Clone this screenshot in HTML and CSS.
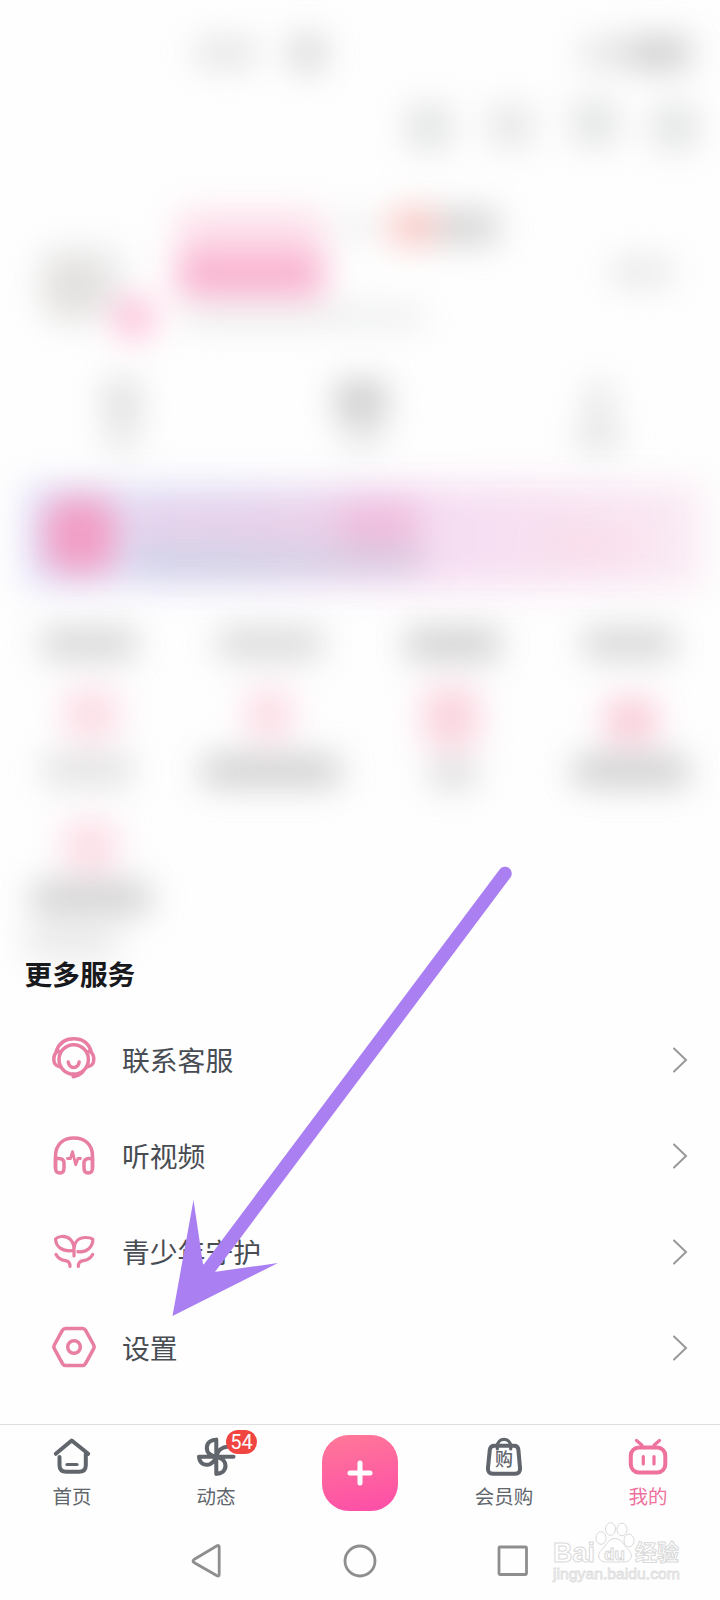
FILE: index.html
```html
<!DOCTYPE html>
<html lang="zh-CN">
<head>
<meta charset="utf-8">
<title>我的</title>
<link rel="stylesheet" href="styles.css">
</head>
<body>
<main class="screen">
  <section class="profile" aria-hidden="true">
    <svg class="haze" width="720" height="960" viewBox="0 0 720 960">
      <defs>
        <linearGradient id="vip" x1="0" x2="1" y1="0" y2="0">
          <stop offset="0" stop-color="#e2e4fb"/>
          <stop offset=".3" stop-color="#e4e0f5"/>
          <stop offset=".6" stop-color="#f5dcf2"/>
          <stop offset="1" stop-color="#faeaf3"/>
        </linearGradient>
        <filter id="soft" filterUnits="userSpaceOnUse" x="-60" y="-60" width="840" height="1080" color-interpolation-filters="sRGB"><feGaussianBlur stdDeviation="17"/></filter>
      </defs>
      <g filter="url(#soft)">
        <rect x="24" y="484" width="676" height="104" fill="url(#vip)"/>
      </g>
      <g class="haze-content" filter="url(#soft)">
        <g fill="#cfcfcf">
          <rect x="196" y="40" width="60" height="26"/>
          <rect x="292" y="36" width="32" height="34" fill="#b8b8b8"/>
          <rect x="582" y="40" width="50" height="26"/>
          <rect x="632" y="38" width="58" height="30" fill="#a8a8a8"/>
        </g>
        <g fill="#cdcfcf">
          <rect x="408" y="106" width="42" height="42"/>
          <rect x="490" y="106" width="42" height="40" fill="#d4d5d5"/>
          <rect x="574" y="102" width="42" height="42"/>
          <rect x="654" y="106" width="42" height="42"/>
        </g>
        <rect x="43" y="248" width="80" height="64" fill="#e2e2e2"/>
        <ellipse cx="73" cy="288" rx="33" ry="35" fill="#d2cfcc"/>
        <circle cx="134" cy="318" r="20" fill="#ff8cbc"/>
        <rect x="178" y="212" width="144" height="40" fill="#fcc8dc"/>
        <rect x="178" y="254" width="146" height="42" fill="#f67fb0"/>
        <rect x="184" y="310" width="240" height="14" fill="#d2d5d4"/>
        <rect x="338" y="218" width="34" height="18" fill="#dedede"/>
        <rect x="390" y="210" width="46" height="34" fill="#f5a09a"/>
        <rect x="438" y="211" width="60" height="32" fill="#b6b6b6"/>
        <rect x="612" y="260" width="60" height="24" fill="#d4d4d4"/>
        <rect x="105" y="382" width="34" height="34" fill="#c2c2c2"/>
        <rect x="105" y="424" width="34" height="24" fill="#d0d0d0"/>
        <rect x="336" y="382" width="50" height="36" fill="#a8a8a8"/>
        <rect x="343" y="424" width="38" height="22" fill="#cecece"/>
        <rect x="590" y="384" width="18" height="32" fill="#c0c0c0"/>
        <rect x="578" y="424" width="42" height="24" fill="#cacaca"/>
        <rect x="130" y="508" width="290" height="28" fill="#eac0de"/>
        <rect x="340" y="502" width="76" height="44" fill="#efa8d0"/>
        <rect x="132" y="550" width="290" height="18" fill="#b5b5c8"/>
        <rect x="44" y="497" width="72" height="76" rx="20" fill="#fb72a4"/>
        <rect x="545" y="528" width="92" height="30" fill="#fbd9e3"/>
        <g fill="#aeaeae">
          <rect x="42" y="631" width="94" height="25"/>
          <rect x="218" y="631" width="104" height="25" fill="#b6b6b8"/>
          <rect x="406" y="631" width="94" height="26" fill="#a4a4a4"/>
          <rect x="584" y="631" width="90" height="25"/>
          <rect x="44" y="758" width="88" height="24" fill="#c4c4c4"/>
          <rect x="202" y="757" width="138" height="28" fill="#aaaaaa"/>
          <rect x="432" y="762" width="42" height="24" fill="#b8b8b8"/>
          <rect x="574" y="757" width="114" height="28" fill="#a8a8a8"/>
          <rect x="32" y="884" width="118" height="28" fill="#aaaaaa"/>
          <rect x="26" y="932" width="92" height="22" fill="#cecece"/>
        </g>
        <g fill="#fac6d5">
          <rect x="64" y="690" width="54" height="48"/>
          <rect x="246" y="690" width="46" height="48"/>
          <rect x="424" y="688" width="54" height="58" fill="#f8b6c9"/>
          <rect x="606" y="700" width="50" height="40" fill="#f6a4bc"/>
          <rect x="64" y="822" width="52" height="48"/>
        </g>
      </g>
    </svg>
  </section>

  <section class="services">
    <h2 class="services-title">更多服务</h2>
    <ul class="list">
      <li class="row">
        <svg class="row-icon" viewBox="0 0 48 48">
          <path d="M6.200 15.500C9 6.800 15.500 2.800 23.700 2.800S38.500 6.800 41.200 15.500"/>
          <circle cx="23.700" cy="23.500" r="14.700"/>
          <path d="M8.500 15.200C5 16.500 3.800 19.500 3.800 23.300s2 7 6 7.400M38.900 15.200C42.500 16.500 43.800 19.500 43.800 23.300s-2 7-6 7.400M18.200 26c1.300 7.200 9.700 7.200 11 0M23.200 38v2.700c3.500-.4 6.800-2 9.500-4.700"/>
        </svg>
        <span class="row-label">联系客服</span>
        <svg class="chevron" viewBox="0 0 16 26"><path d="M2 1.500 14 13 2 24.500"/></svg>
      </li>
      <li class="row">
        <svg class="row-icon" viewBox="0 0 48 48">
          <path d="M5.500 36V24C5.500 12.500 13 6 24 6S42.500 12.500 42.500 24v12"/>
          <path d="M5.500 26.500h3.500q5 0 5 5v4.500q0 5-4.200 5t-4.300-5zM42.500 26.500h-3.500q-5 0-5 5v4.500q0 5 4.200 5t4.300-5z"/>
          <path class="thin" d="M17.500 26.500h3L22.500 19.700l3.200 13L28 26.500h2.500"/>
        </svg>
        <span class="row-label">听视频</span>
        <svg class="chevron" viewBox="0 0 16 26"><path d="M2 1.500 14 13 2 24.500"/></svg>
      </li>
      <li class="row">
        <svg class="row-icon sprout" viewBox="0 0 48 48">
          <path d="M24 28v-6C24 13 19 8 11.500 8.500Q7.500 8.800 5.500 11C6 19 12 23.500 22 22.700M24 22C24 14 28.500 9.500 35.500 9.500q5 0 7.300 1.800C43 19.500 36 25 27.800 23.700"/>
          <path d="M6 26.500c2 3.800 5 5.500 9.500 6.200q4.500.8 4.500 5.800M42.700 26.500c-2 3.800-5 5.500-9.500 6.200q-4.900.8-4.900 5.800"/>
        </svg>
        <span class="row-label">青少年守护</span>
        <svg class="chevron" viewBox="0 0 16 26"><path d="M2 1.500 14 13 2 24.500"/></svg>
      </li>
      <li class="row">
        <svg class="row-icon" viewBox="0 0 48 48">
          <path d="M15.500 4.500h17q2 0 3 1.700l8.200 14.800q1 1.800 0 3.600l-8.200 15q-1 1.800-3 1.800h-17q-2 0-3-1.800l-8.200-15q-1-1.800 0-3.600L12.500 6.200q1-1.700 3-1.700z"/>
          <circle cx="24" cy="23" r="6.300"/>
        </svg>
        <span class="row-label">设置</span>
        <svg class="chevron" viewBox="0 0 16 26"><path d="M2 1.500 14 13 2 24.500"/></svg>
      </li>
    </ul>
  </section>

  <nav class="tabs">
    <a class="tab">
      <svg class="tab-icon" viewBox="0 0 48 48">
        <path d="M7.800 21.800 23.700 8.500 40.200 21.800M11.500 25v8.300q0 6.500 7 6.500h12.300q7 0 7-6.500V22"/>
        <path class="fine" d="M19 32.500h10"/>
      </svg>
      <span>首页</span>
    </a>
    <a class="tab">
      <span class="badge-wrap">
        <svg class="tab-icon" viewBox="0 0 48 48">
          <path d="M24.300 7.500v34.500M7 24.700H41.500M24.300 7.800C16.500 8 13.500 13 15.300 19q1.700 4.500 9 5.700M7 24.700C7.500 31.500 12 34 17.500 32.300q5-1.800 6.800-7.600M24.300 41.700C32 41.500 35 36 32.800 30.500q-2-4.500-8.500-5.800M24.300 24.700Q26 17.500 31 15.800q1.500-.7 3.500-.7"/>
        </svg>
        <b class="badge">54</b>
      </span>
      <span>动态</span>
    </a>
    <a class="tab tab-add">
      <span class="add"><svg width="26" height="26" viewBox="0 0 26 26"><path d="M13 3v20M3 13h20"/></svg></span>
    </a>
    <a class="tab">
      <svg class="tab-icon" viewBox="0 0 48 48">
        <path d="M14.500 13.700h19.500q4 0 4.400 4l1.600 18q.5 6-5 6H13q-5.500 0-5-6l1.800-18q.6-4 4.700-4z"/>
        <path class="fine" d="M17.300 17v-2.500C17.300 5 30.700 5 30.700 14.500V17"/>
        <text class="bag-mark" x="24" y="34">购</text>
      </svg>
      <span>会员购</span>
    </a>
    <a class="tab tab-active">
      <svg class="tab-icon" viewBox="0 0 48 48">
        <rect x="6.800" y="15.500" width="34.500" height="25" rx="8"/>
        <path class="fine" d="M19.300 24.500v7.500M30 24.500v7.500M12.500 8.500l5.500 4.700M35.500 8.500 30 13.200"/>
      </svg>
      <span>我的</span>
    </a>
  </nav>

  <div class="system">
    <svg class="sys-icon" viewBox="0 0 36 36"><path d="M5 16.500 28 2.800q2.200-1 2.200 1.500v27q0 2.500-2.200 1.500L5 19.500q-2-1.500 0-3z"/></svg>
    <svg class="sys-icon" viewBox="0 0 36 36"><circle cx="18" cy="18" r="15"/></svg>
    <svg class="sys-icon" viewBox="0 0 36 36"><rect x="4" y="4" width="27.500" height="27.500" rx="1"/></svg>
  </div>

  <svg class="watermark" width="140" height="70" viewBox="0 0 140 70">
    <g class="wm-shape">
      <ellipse cx="53" cy="18" rx="5" ry="6.300"/>
      <ellipse cx="62.500" cy="9" rx="5" ry="6.300"/>
      <ellipse cx="74" cy="9.500" rx="5" ry="6.300"/>
      <ellipse cx="81" cy="20.500" rx="5" ry="6.300"/>
      <path d="M67 18.500c-7 0-8.500 7-13 11-6 5-3.500 12.500 4 12.500h18c7.500 0 10-7.500 4-12.500-4.500-4-6-11-13-11z"/>
    </g>
    <text class="wm-brand" x="5" y="41.500" textLength="42" lengthAdjust="spacingAndGlyphs">Bai</text>
    <text class="wm-du" x="56" y="40" textLength="21">du</text>
    <text class="wm-cn" x="87" y="40" textLength="44">经验</text>
    <text class="wm-url" x="5" y="59" textLength="127" lengthAdjust="spacingAndGlyphs">jingyan.baidu.com</text>
  </svg>

  <svg class="pointer" width="720" height="1600" viewBox="0 0 720 1600">
    <path class="shaft" d="M505 873.500 206.500 1272"/>
    <path class="head" d="M172.500 1316 193.500 1200 203 1264 214 1272 278 1263z"/>
  </svg>
</main>
</body>
</html>
```
FILE: styles.css
```css
* { box-sizing: border-box; }

body {
  margin: 0;
  background: #fefefe;
  font-family: "Noto Sans CJK SC", sans-serif;
}

.screen {
  position: relative;
  display: flex;
  flex-direction: column;
  width: 720px;
  height: 1600px;
  overflow: hidden;
}

.profile { height: 940px; }

.haze {
  display: block;
  overflow: visible;
}

.haze-content { opacity: .62; }

.services {
  position: relative;
  height: 484px;
}

.services-title {
  margin: 0;
  padding: 13px 0 0 24.5px;
  height: 72px;
  font-size: 27.7px;
  line-height: 40px;
  font-weight: 700;
  color: #18191c;
}

.list {
  margin: 0;
  padding: 0;
  list-style: none;
}

.row {
  display: flex;
  align-items: center;
  height: 96px;
  padding: 0 32px 0 50px;
}

.row-icon {
  width: 48px;
  height: 48px;
  fill: none;
  stroke: #e87ea3;
  stroke-width: 3.5;
  stroke-linecap: round;
  stroke-linejoin: round;
}

.thin { stroke-width: 2.8; }
.sprout { stroke-width: 3.2; }

.row-label {
  flex: 1;
  margin-left: 24px;
  padding-bottom: 3px;
  font-size: 27.8px;
  line-height: 40px;
  color: #484c53;
}

.chevron {
  width: 16px;
  height: 26px;
  fill: none;
  stroke: #999;
  stroke-width: 2;
  stroke-linecap: round;
}

.tabs {
  display: grid;
  grid-template-columns: repeat(5, 1fr);
  height: 96px;
  border-top: 1px solid #dedede;
}

.tab {
  display: flex;
  flex-direction: column;
  align-items: center;
  padding-top: 7px;
  font-size: 19.5px;
  line-height: 32px;
  color: #61666d;
}

.tab-icon {
  display: block;
  width: 48px;
  height: 48px;
  fill: none;
  stroke: currentColor;
  stroke-width: 4;
  stroke-linecap: round;
  stroke-linejoin: round;
}

.fine { stroke-width: 3.2; }
.tab-active { color: #ee719e; }
.badge-wrap { position: relative; }

.badge {
  position: absolute;
  left: 34px;
  top: -2px;
  width: 31px;
  height: 24px;
  border-radius: 12px;
  background: #f04540;
  color: #fff;
  font: 400 20px/25px Roboto, sans-serif;
  text-align: center;
}

.bag-mark {
  font-size: 18px;
  font-weight: 500;
  text-anchor: middle;
  fill: currentColor;
  stroke: none;
}

.tab-add { padding-top: 10px; }

.add {
  display: flex;
  align-items: center;
  justify-content: center;
  width: 76px;
  height: 76px;
  border-radius: 27px;
  background: linear-gradient(170deg, #ff7898, #fd4da8);
}

.add svg {
  fill: none;
  stroke: #fff;
  stroke-width: 5;
  stroke-linecap: round;
}

.system {
  display: flex;
  justify-content: center;
  gap: 117px;
  height: 80px;
  padding-top: 22.5px;
}

.sys-icon {
  width: 36px;
  height: 36px;
  fill: none;
  stroke: #8e8e8e;
  stroke-width: 2.8;
}

.watermark {
  position: absolute;
  left: 548px;
  top: 1520px;
}

.watermark text,
.wm-shape {
  fill: #fff;
  stroke: #d9d9d9;
  stroke-width: 1;
}

.watermark .wm-brand { font: 700 27px "Liberation Sans", sans-serif; }
.watermark .wm-du { font: 700 17px "Liberation Sans", sans-serif; }
.watermark .wm-cn { font: 700 22px "Noto Sans CJK SC", sans-serif; }

.watermark .wm-url {
  font: 400 14px "Liberation Sans", sans-serif;
  fill: #fafafa;
  stroke: #dedede;
  stroke-width: .8;
}

.pointer {
  position: absolute;
  left: 0;
  top: 0;
}

.shaft {
  fill: none;
  stroke: #a97ff2;
  stroke-width: 13.5;
  stroke-linecap: round;
}

.head { fill: #a97ff2; }
```
